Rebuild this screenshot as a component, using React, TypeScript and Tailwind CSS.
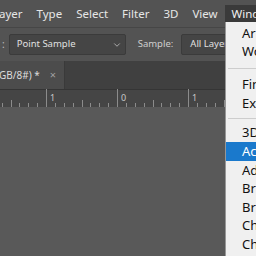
import { ChevronDown } from 'lucide-react'

const menus = ['Layer', 'Type', 'Select', 'Filter', '3D', 'View']

const dropItems: (string | null)[] = ['Arrange', 'Workspace', null, 'Find Extensions', 'Extensions', null, '3D', 'Actions', 'Adjustments', 'Brush Settings', 'Brushes', 'Channels', 'Character']

function Ruler() {
  const ticks = []
  for (let i = 0; i < 30; i++) {
    const x = -25 + i * 8.875
    const k = i % 8
    const h = k === 0 ? 18 : k === 4 ? 7 : 4
    ticks.push(
      <div key={i} className="absolute bottom-0 w-px bg-[#8c8c8c]" style={{ left: Math.round(x), height: h }} />
    )
  }
  return (
    <div className="relative h-[18px] bg-[#454545] border-t border-[#353535] shrink-0">
      {ticks}
      <span className="absolute left-[50px] top-[3px] text-[9px] leading-none text-[#c8c8c8]">1</span>
      <span className="absolute left-[121px] top-[3px] text-[9px] leading-none text-[#c8c8c8]">0</span>
      <span className="absolute left-[192px] top-[3px] text-[9px] leading-none text-[#c8c8c8]">1</span>
    </div>
  )
}

export default function App() {
  return (
    <div className="relative w-[256px] h-[256px] overflow-hidden bg-[#595959] font-['Noto_Sans',sans-serif] flex flex-col">
      <div className="h-[27px] bg-[#535353] flex items-center ml-[-14px] shrink-0">
        {menus.map((m) => (
          <span key={m} className="shrink-0 px-[7px] text-[11.5px] text-[#e6e6e6] whitespace-nowrap">{m}</span>
        ))}
        <span className="shrink-0 px-[7px] h-[17px] flex items-center bg-[#3a3a3a] text-[11.5px] text-[#f0f0f0] whitespace-nowrap">Window</span>
      </div>

      <div className="h-[34px] bg-[#535353] border-t border-[#464646] flex items-center shrink-0">
        <span className="shrink-0 ml-[2px] text-[10px] text-[#bdbdbd]">:</span>
        <div className="shrink-0 ml-[4px] w-[117px] h-[21px] bg-[#454545] border border-[#3b3b3b] rounded-[2px] flex items-center justify-between pl-[7px] pr-[3px]">
          <span className="text-[9.5px] text-[#e0e0e0] whitespace-nowrap">Point Sample</span>
          <ChevronDown className="w-[10px] h-[10px] text-[#bdbdbd]" strokeWidth={2} />
        </div>
        <span className="shrink-0 ml-[12px] text-[9.5px] text-[#cfcfcf]">Sample:</span>
        <div className="shrink-0 ml-[8px] w-[100px] h-[21px] bg-[#454545] border border-[#3b3b3b] rounded-[2px] flex items-center pl-[8px]">
          <span className="text-[9.5px] text-[#e0e0e0] whitespace-nowrap">All Layers</span>
        </div>
      </div>

      <div className="h-[28px] bg-[#404040] flex shrink-0">
        <div className="w-[65px] bg-[#4c4c4c] border-r border-[#3a3a3a] flex items-center overflow-hidden">
          <span className="ml-[-1px] text-[10px] text-[#dcdcdc] whitespace-nowrap">GB/8#) *</span>
          <span className="ml-[10px] text-[11px] text-[#a0a0a0]">×</span>
        </div>
      </div>

      <Ruler />

      <div className="flex-1" />

      <div className="absolute left-[225px] top-[22px] w-[200px] h-[240px] bg-[#f0f0f0] border-l border-[#979797] pt-[2px]">
        {dropItems.map((it, i) =>
          it === null ? (
            <div key={i} className={(i === 2 ? 'h-[14px]' : 'h-[11px]') + ' flex items-center pl-[2px]'}>
              <div className="h-px w-full bg-[#cdcdcd]" />
            </div>
          ) : (
            <div
              key={i}
              className={
                'h-[18.67px] flex items-center pl-[16px] text-[13px] whitespace-nowrap ' +
                (it === 'Actions' ? 'bg-[#1a79cc] text-white' : 'text-[#111]')
              }
            >
              {it}
            </div>
          )
        )}
      </div>
    </div>
  )
}
